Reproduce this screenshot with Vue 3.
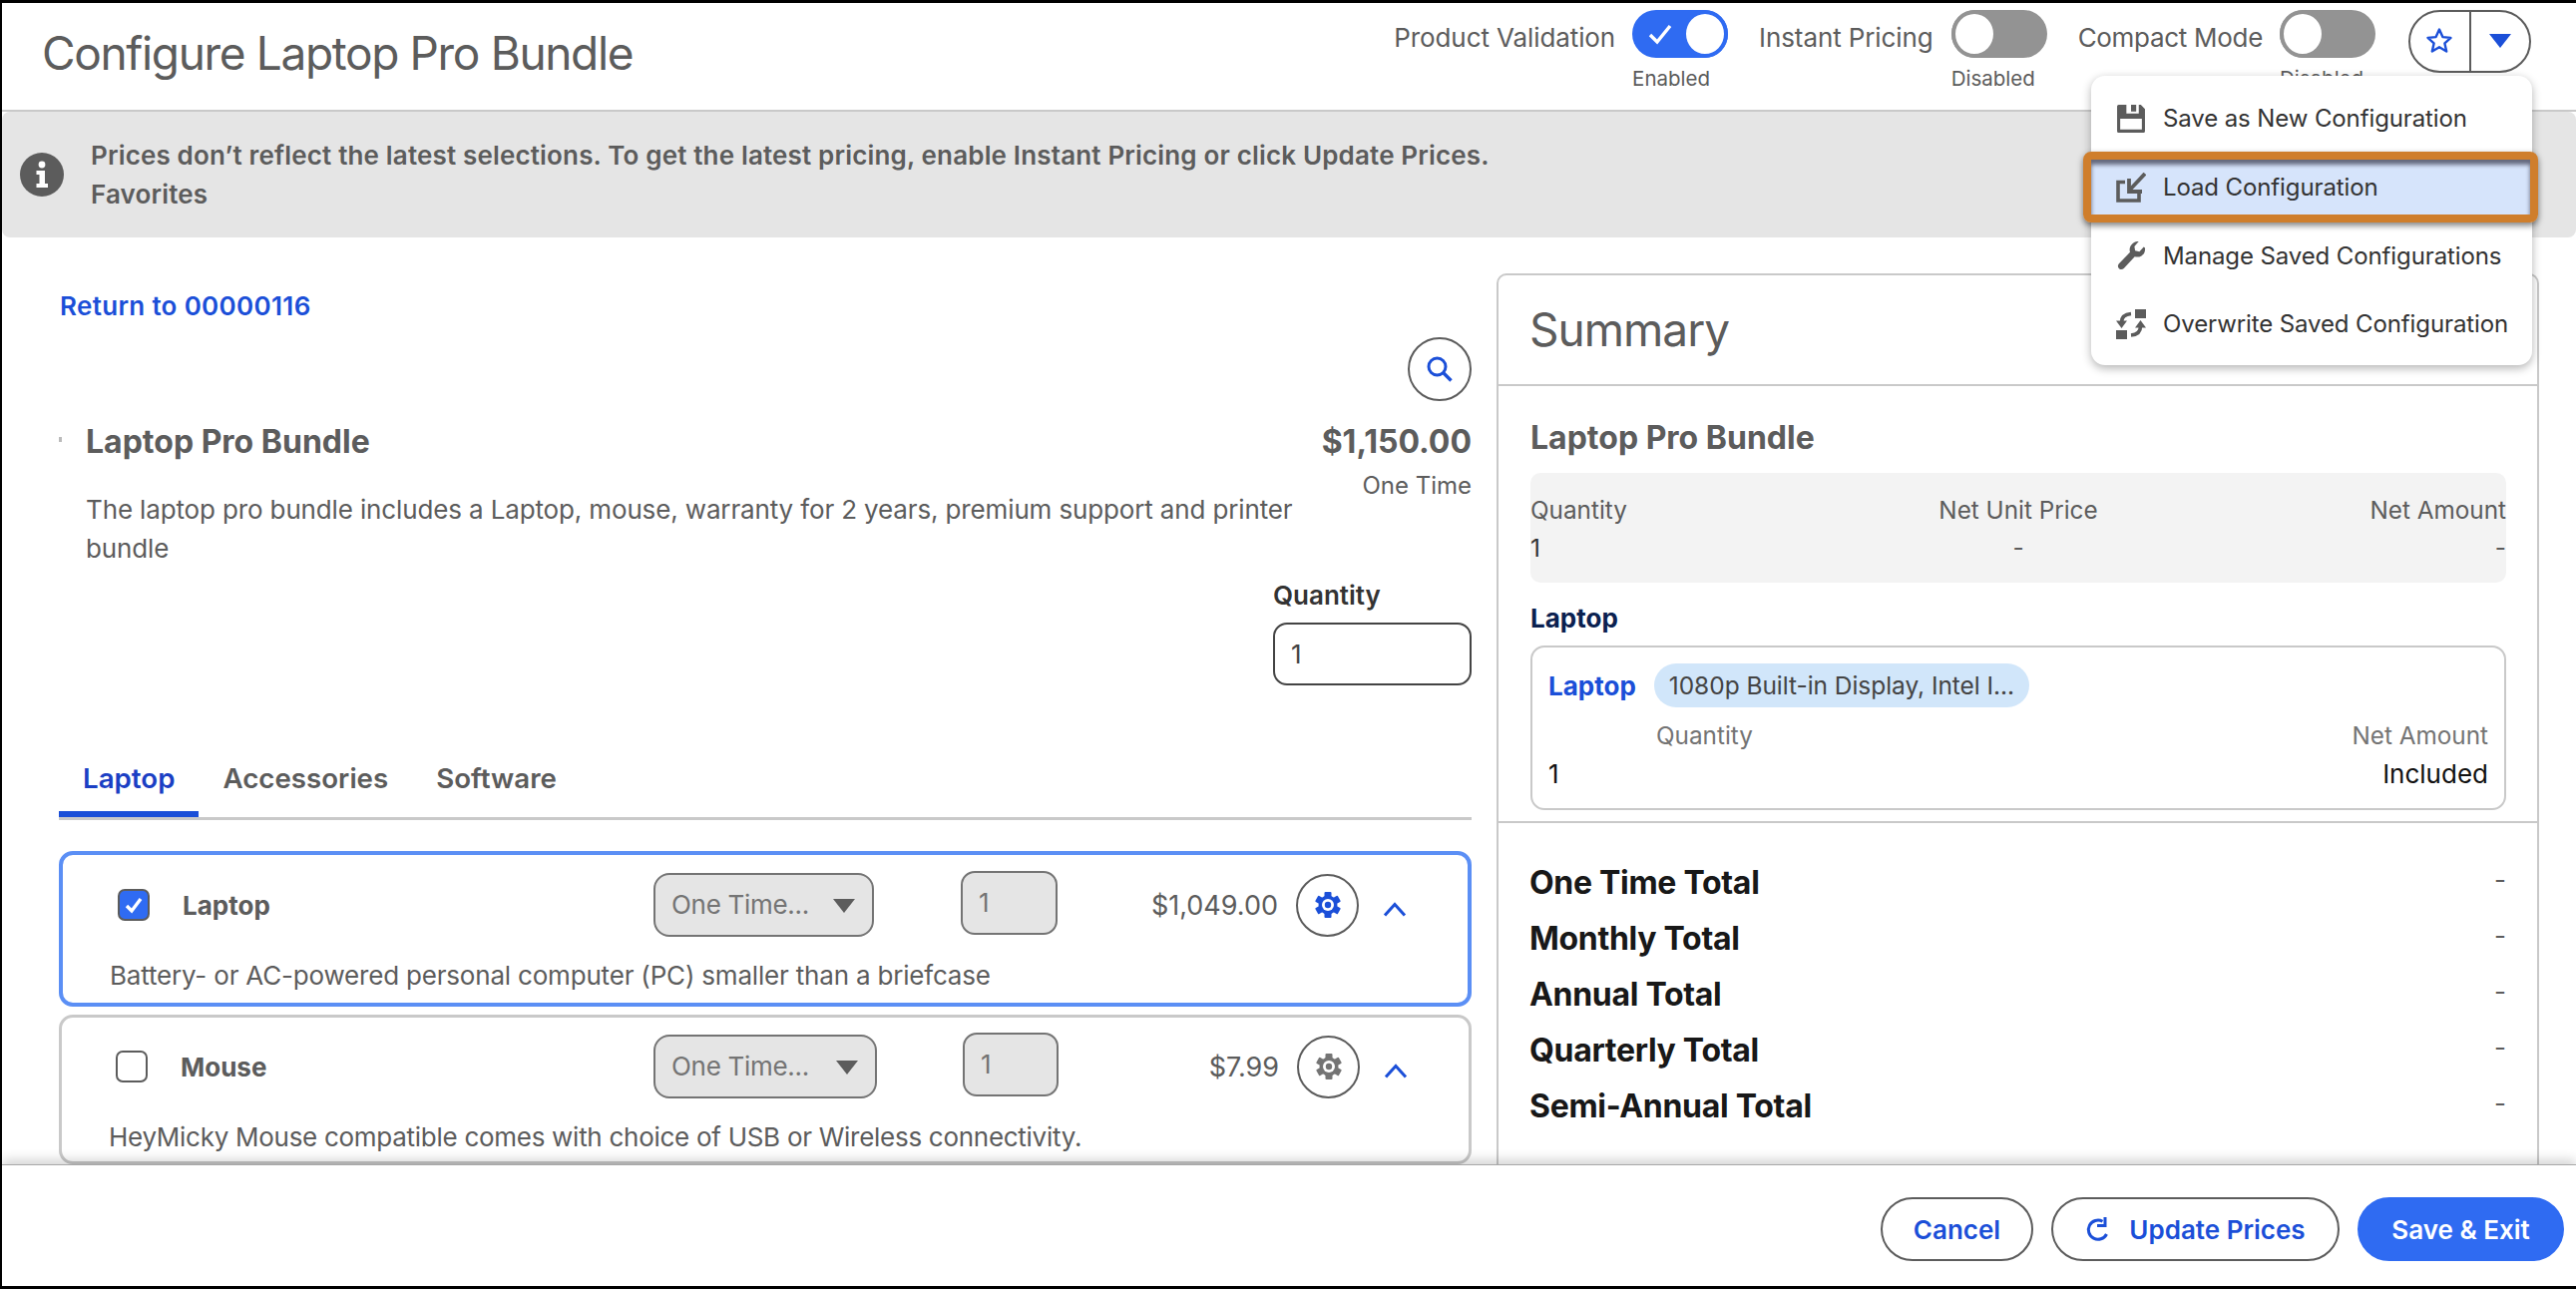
<script setup>
const toggles = [
  { label: 'Product Validation', state: 'Enabled', on: true },
  { label: 'Instant Pricing', state: 'Disabled', on: false },
  { label: 'Compact Mode', state: 'Disabled', on: false },
]
const tabs = ['Laptop', 'Accessories', 'Software']
const totals = ['One Time Total', 'Monthly Total', 'Annual Total', 'Quarterly Total', 'Semi-Annual Total']
const gearTeeth = [0, 60, 120, 180, 240, 300]
</script>

<template>
  <div class="page">
    <header class="header">
      <h1 class="title">Configure Laptop Pro Bundle</h1>
      <div class="controls">
        <div v-for="t in toggles" :key="t.label" class="toggle-item">
          <span class="toggle-label">{{ t.label }}</span>
          <div class="toggle-col">
            <span class="toggle" :class="{ on: t.on }">
              <svg v-if="t.on" class="toggle-check" viewBox="0 0 26 22"><path d="M3 12l7 7L23 3" fill="none" stroke="#fff" stroke-width="3.4" /></svg>
              <span class="knob"></span>
            </span>
            <span class="toggle-state">{{ t.state }}</span>
          </div>
        </div>
        <div class="split">
          <span class="split-part">
            <svg width="28" height="28" viewBox="0 0 28 28"><path d="M14 2.5l3.4 7.6 8.1.8-6.1 5.5 1.8 8.1L14 20.3l-7.2 4.2 1.8-8.1-6.1-5.5 8.1-.8z" fill="none" stroke="#1b4fd8" stroke-width="2.4" stroke-linejoin="round" /></svg>
          </span>
          <span class="split-part split-right">
            <svg width="22" height="14" viewBox="0 0 22 14"><path d="M0 0h22L11 14z" fill="#1b4fd8" /></svg>
          </span>
        </div>
      </div>
    </header>

    <div class="banner">
      <svg class="info" viewBox="0 0 44 44">
        <circle cx="22" cy="22" r="22" fill="#5c5c5c" />
        <circle cx="22" cy="12" r="3.4" fill="#fff" />
        <path d="M16.5 18h8.5v13h3v4H16.5v-4h3v-9h-3z" fill="#fff" />
      </svg>
      <div class="banner-text">
        <div>Prices don’t reflect the latest selections. To get the latest pricing, enable Instant Pricing or click Update Prices.</div>
        <div>Favorites</div>
      </div>
    </div>

    <main class="main">
      <section class="left">
        <a class="return">Return to 00000116</a>
        <div class="search-row">
          <span class="round-btn search">
            <svg width="28" height="28" viewBox="0 0 28 28"><circle cx="11.5" cy="11.5" r="8.5" fill="none" stroke="#1b4fd8" stroke-width="3" /><path d="M17.5 17.5l8 8" stroke="#1b4fd8" stroke-width="3.4" /></svg>
          </span>
        </div>
        <div class="product">
          <div class="product-main">
            <h2 class="product-title">Laptop Pro Bundle</h2>
            <p class="product-desc">The laptop pro bundle includes a Laptop, mouse, warranty for 2 years, premium support and printer bundle</p>
          </div>
          <div class="product-price">
            <div class="price-big">$1,150.00</div>
            <div class="price-sub">One Time</div>
          </div>
        </div>
        <div class="qty-block">
          <div class="qty-label">Quantity</div>
          <div class="qty-input">1</div>
        </div>
        <nav class="tabs">
          <span v-for="(tab, i) in tabs" :key="tab" class="tab" :class="{ active: i === 0 }">{{ tab }}</span>
        </nav>

        <article class="card card-active">
          <div class="card-row">
            <span class="check checked">
              <svg width="22" height="20" viewBox="0 0 22 20"><path d="M4 11l5 5 9-12" fill="none" stroke="#fff" stroke-width="3.4" /></svg>
            </span>
            <span class="card-name">Laptop</span>
            <span class="select">One Time...<i class="select-caret"></i></span>
            <span class="mini-qty">1</span>
            <span class="card-price">$1,049.00</span>
            <span class="round-btn gear-btn">
              <svg width="30" height="30" viewBox="0 0 30 30">
                <g fill="#1b4fd8">
                  <rect v-for="a in gearTeeth" :key="a" x="11.5" y="2" width="7" height="6" rx="1" :transform="`rotate(${a} 15 15)`" />
                  <circle cx="15" cy="15" r="9.5" />
                </g>
                <circle cx="15" cy="15" r="6" fill="#fff" />
                <circle cx="15" cy="15" r="3.2" fill="#1b4fd8" />
              </svg>
            </span>
            <svg class="chevron" width="24" height="15" viewBox="0 0 24 15"><path d="M2 13.5L12 2.5l10 11" fill="none" stroke="#1b4fd8" stroke-width="3" /></svg>
          </div>
          <p class="card-desc">Battery- or AC-powered personal computer (PC) smaller than a briefcase</p>
        </article>

        <article class="card card-plain">
          <div class="card-row">
            <span class="check"></span>
            <span class="card-name">Mouse</span>
            <span class="select">One Time...<i class="select-caret"></i></span>
            <span class="mini-qty">1</span>
            <span class="card-price">$7.99</span>
            <span class="round-btn gear-btn">
              <svg width="30" height="30" viewBox="0 0 30 30">
                <g fill="#747474">
                  <rect v-for="a in gearTeeth" :key="a" x="11.5" y="2" width="7" height="6" rx="1" :transform="`rotate(${a} 15 15)`" />
                  <circle cx="15" cy="15" r="9.5" />
                </g>
                <circle cx="15" cy="15" r="6" fill="#fff" />
                <circle cx="15" cy="15" r="3.2" fill="#747474" />
              </svg>
            </span>
            <svg class="chevron" width="24" height="15" viewBox="0 0 24 15"><path d="M2 13.5L12 2.5l10 11" fill="none" stroke="#1b4fd8" stroke-width="3" /></svg>
          </div>
          <p class="card-desc">HeyMicky Mouse compatible comes with choice of USB or Wireless connectivity.</p>
        </article>
      </section>

      <aside class="summary">
        <div class="summary-head">Summary</div>
        <div class="summary-body">
          <h2 class="summary-title">Laptop Pro Bundle</h2>
          <div class="stat-box">
            <span class="stat-label">Quantity</span>
            <span class="stat-label center">Net Unit Price</span>
            <span class="stat-label right">Net Amount</span>
            <span class="stat-one">1</span>
            <span class="stat-dash center">-</span>
            <span class="stat-dash right">-</span>
          </div>
          <h3 class="group-title">Laptop</h3>
          <div class="line-card">
            <div class="line-head">
              <span class="line-link">Laptop</span>
              <span class="pill">1080p Built-in Display, Intel I...</span>
            </div>
            <div class="line-row line-labels">
              <span>Quantity</span>
              <span>Net Amount</span>
            </div>
            <div class="line-row line-values">
              <span>1</span>
              <span>Included</span>
            </div>
          </div>
        </div>
        <div class="totals">
          <div v-for="t in totals" :key="t" class="total-row">
            <span class="total-name">{{ t }}</span>
            <span class="total-dash">-</span>
          </div>
        </div>
      </aside>
    </main>

    <footer class="footer">
      <button class="btn btn-cancel">Cancel</button>
      <button class="btn btn-update">
        <svg width="26" height="26" viewBox="0 0 26 26"><path d="M17.5 5.2A9.6 9.6 0 1 0 21.5 18" fill="none" stroke="#1b4fd8" stroke-width="3" /><path d="M20 1v8.5h-8" fill="none" stroke="#1b4fd8" stroke-width="3" /></svg>
        Update Prices
      </button>
      <button class="btn btn-save">Save &amp; Exit</button>
    </footer>

    <div class="menu">
      <div class="menu-item">
        <svg class="menu-icon" viewBox="0 0 29 29">
          <path d="M1 2.500A1.500 1.500 0 0 1 2.500 1H24L28 5V26.500A1.500 1.500 0 0 1 26.500 28H2.500A1.500 1.500 0 0 1 1 26.500ZM4 14.500V25H25V14.500ZM10 1V9.500H22V1H19.500V7.500H14.500V1Z" fill="#5c5c5c" fill-rule="evenodd" />
        </svg>
        <span>Save as New Configuration</span>
      </div>
      <div class="menu-item menu-item-hot">
        <svg class="menu-icon" viewBox="0 0 30 30">
          <path d="M9 9.500H2V28H23V19" fill="none" stroke="#5c5c5c" stroke-width="3.600" />
          <path d="M29 1L14 17" fill="none" stroke="#5c5c5c" stroke-width="3.800" />
          <path d="M13 6V19H26" fill="none" stroke="#5c5c5c" stroke-width="3.800" />
        </svg>
        <span>Load Configuration</span>
      </div>
      <div class="menu-item">
        <svg class="menu-icon" viewBox="0 0 30 30">
          <path d="M29 7.500c.4 3.400-1 6.300-3.500 7.900-2.100 1.300-4.600 1.500-6.800.8L7.800 28c-1.300 1.400-3.400 1.500-4.800.2-1.500-1.400-1.500-3.500-.1-4.900L14 11.800c-.8-2.400-.4-5 1.100-7.100C17 2 20 .6 22.700 1.100l-4.300 4.900.7 4.300 4.300 1 4.300-4.900z" fill="#5c5c5c" />
        </svg>
        <span>Manage Saved Configurations</span>
      </div>
      <div class="menu-item">
        <svg class="menu-icon" viewBox="0 0 30 30">
          <rect x="19" y="0" width="11" height="9" fill="#5c5c5c" />
          <rect x="0" y="21" width="11" height="9" fill="#5c5c5c" />
          <path d="M15 4.500C9 5 5.500 7.500 5.500 13" fill="none" stroke="#5c5c5c" stroke-width="3.600" />
          <path d="M0 11.500h11L5.500 19z" fill="#5c5c5c" />
          <path d="M15 26C21 25.500 24.500 23 24.500 17" fill="none" stroke="#5c5c5c" stroke-width="3.600" />
          <path d="M19 18.500h11L24.500 11z" fill="#5c5c5c" />
        </svg>
        <span>Overwrite Saved Configuration</span>
      </div>
    </div>
  </div>
</template>

<style>
html, body { margin: 0; background: #fff; }
</style>

<style scoped>
.page {
  position: relative;
  width: 2582px;
  height: 1292px;
  box-sizing: border-box;
  border-top: 3px solid #000;
  border-left: 2px solid #000;
  border-bottom: 3px solid #000;
  overflow: hidden;
  display: flex;
  flex-direction: column;
  font-family: Inter, "Liberation Sans", sans-serif;
  font-size: 26px;
  color: #5c5c5c;
  background: #fff;
}
.header {
  height: 109px;
  box-sizing: border-box;
  flex: none;
  border-bottom: 2px solid #c9c9c9;
  display: flex;
  justify-content: space-between;
  padding: 0 45px 0 40px;
}
.title {
  margin: 22px 0 0;
  font-size: 46px;
  line-height: 56px;
  font-weight: 400;
  letter-spacing: -1.350px;
}
.controls { display: flex; align-items: flex-start; padding-top: 7px; }
.toggle-item { display: flex; margin-right: 32px; }
.toggle-item:first-child { margin-right: 31px; }
.toggle-item:nth-child(2) { margin-right: 31px; }
.toggle-label { margin-top: 8px; line-height: 40px; margin-right: 17px; letter-spacing: -0.100px; }
.toggle-item:nth-child(2) .toggle-label { margin-right: 18px; }
.toggle-item:nth-child(3) .toggle-label { letter-spacing: -0.300px; }
.toggle-col { width: 96px; display: flex; flex-direction: column; }
.toggle {
  position: relative;
  width: 96px;
  height: 48px;
  box-sizing: border-box;
  border-radius: 24px;
  background: #939393;
  display: flex;
  align-items: center;
}
.toggle.on { background: #2f6bf2; justify-content: flex-end; }
.toggle-check { position: absolute; left: 15px; top: 13px; width: 26px; height: 22px; }
.knob {
  width: 46px;
  height: 48px;
  box-sizing: border-box;
  border-radius: 50%;
  background: #fff;
  border: 4px solid #939393;
}
.on .knob { border-color: #2f6bf2; }
.toggle-state { margin-top: 8px; font-size: 20.500px; line-height: 26px; white-space: nowrap; }
.split {
  margin-left: 1px;
  width: 123px;
  height: 63px;
  box-sizing: border-box;
  border: 2px solid #5c5c5c;
  border-radius: 32px;
  display: flex;
}
.split-part { flex: 1; display: flex; align-items: center; justify-content: center; padding-bottom: 2px; }
.split-right { border-left: 2px solid #5c5c5c; }
.banner {
  height: 126px;
  flex: none;
  box-sizing: border-box;
  background: #e5e5e5;
  border-radius: 8px;
  display: flex;
  align-items: center;
  padding-left: 18px;
  font-weight: 600;
  line-height: 39px;
}
.info { width: 44px; height: 44px; margin-right: 27px; flex: none; }
.banner-text { letter-spacing: 0.160px; }
.main { height: 929px; flex: none; display: flex; overflow: hidden; }
.left {
  width: 1498px;
  flex: none;
  box-sizing: border-box;
  padding: 49px 25px 0 57px;
}
.return { display: block; padding-left: 1px; line-height: 40px; font-weight: 600; color: #1b4fd8; letter-spacing: 0.320px; }
.search-row { display: flex; justify-content: flex-end; margin-top: 11px; }
.round-btn {
  display: flex;
  align-items: center;
  justify-content: center;
  width: 63px;
  height: 63px;
  flex: none;
  box-sizing: border-box;
  border: 2px solid #5c5c5c;
  border-radius: 50%;
  background: #fff;
}
.search { width: 64px; height: 64px; }
.product { position: relative; display: flex; justify-content: space-between; margin-top: 21px; }
.product::before {
  content: "";
  position: absolute;
  left: 0;
  top: 15px;
  width: 3px;
  height: 5px;
  background: #bbb;
}
.product-main { padding-left: 27px; width: 1260px; box-sizing: border-box; }
.product-title { margin: 0; font-size: 32px; line-height: 40px; font-weight: 700; }
.product-desc { margin: 28px 0 0; line-height: 39px; width: 1225px; letter-spacing: -0.140px; }
.product-price { text-align: right; }
.price-big { font-size: 32px; line-height: 40px; font-weight: 700; }
.price-sub { margin-top: 4px; line-height: 40px; font-size: 24px; }
.qty-block { width: 199px; margin: 8px 0 0 auto; }
.qty-label { line-height: 40px; font-weight: 600; color: #333; }
.qty-input {
  margin-top: 7px;
  height: 63px;
  box-sizing: border-box;
  border: 2px solid #444;
  border-radius: 14px;
  padding-left: 16px;
  line-height: 59px;
  color: #444;
}
.tabs { display: flex; margin-top: 73px; border-bottom: 3px solid #c9c9c9; }
.tab {
  height: 59px;
  box-sizing: border-box;
  padding: 0 24px;
  line-height: 40px;
  font-weight: 600;
  font-size: 27.700px;
}
.tab.active { color: #1b3fc4; border-bottom: 6px solid #1b4fd8; }
.card { box-sizing: border-box; border-radius: 14px; background: #fff; }
.card-active { margin-top: 31px; height: 156px; border: 4px solid #5b8ff5; padding: 18px 0 0 55px; }
.card-plain { margin-top: 8px; height: 150px; border: 3px solid #c9c9c9; padding: 17px 0 0 54px; }
.card-row { display: flex; align-items: center; height: 64px; }
.check {
  width: 32px;
  height: 32px;
  box-sizing: border-box;
  flex: none;
  border: 2px solid #5c5c5c;
  border-radius: 7px;
  margin-right: 33px;
  display: flex;
  align-items: center;
  justify-content: center;
  background: #fff;
}
.check.checked { background: #2f6bf2; }
.card-name { font-weight: 700; width: 472px; flex: none; }
.card-plain .card-name { width: 474px; }
.select {
  position: relative;
  width: 221px;
  height: 64px;
  flex: none;
  box-sizing: border-box;
  background: #e5e5e5;
  border: 2px solid #747474;
  border-radius: 16px;
  padding-left: 16px;
  line-height: 60px;
  letter-spacing: -0.300px;
  color: #747474;
}
.card-plain .select { width: 224px; }
.select-caret {
  position: absolute;
  right: 17px;
  top: 24px;
  width: 0;
  height: 0;
  border-left: 11px solid transparent;
  border-right: 11px solid transparent;
  border-top: 14px solid #5c5c5c;
}
.mini-qty {
  width: 97px;
  height: 64px;
  flex: none;
  box-sizing: border-box;
  margin: 0 0 4px 87px;
  background: #e5e5e5;
  border: 2px solid #747474;
  border-radius: 14px;
  padding-left: 16px;
  line-height: 60px;
  color: #747474;
}
.card-plain .mini-qty { margin-left: 86px; width: 96px; }
.card-price { flex: 1; text-align: right; padding-right: 18px; font-size: 27px; }
.gear-btn { width: 63px; height: 63px; }
.chevron { margin: 8px 61px 0 24px; flex: none; }
.card-desc { margin: 19px 0 0 -7px; line-height: 39px; letter-spacing: -0.190px; white-space: nowrap; }
.card-active .card-desc { margin-left: -8px; }
.card-plain .card-desc { letter-spacing: -0.280px; }
.summary {
  width: 1045px;
  height: 1000px;
  margin-top: 36px;
  flex: none;
  box-sizing: border-box;
  border: 2px solid #c9c9c9;
  border-radius: 10px 10px 0 0;
}
.summary-head {
  height: 111px;
  box-sizing: border-box;
  border-bottom: 2px solid #c9c9c9;
  padding: 25px 0 0 31px;
  font-size: 46px;
  line-height: 58px;
  letter-spacing: -1px;
}
.summary-body { padding: 32px 31px 11px 32px; border-bottom: 2px solid #c9c9c9; }
.summary-title { margin: 0; font-size: 32px; line-height: 40px; font-weight: 700; }
.stat-box {
  margin-top: 15px;
  height: 110px;
  box-sizing: border-box;
  background: #f3f3f3;
  border-radius: 10px;
  padding-top: 18px;
  display: grid;
  grid-template-columns: 1fr 1fr 1fr;
  grid-auto-rows: 38px;
  font-size: 24.300px;
  line-height: 38px;
}
.center { text-align: center; }
.right { text-align: right; }
.stat-one { color: #333; }
.group-title { margin: 18px 0 0; font-size: 26px; line-height: 36px; font-weight: 700; color: #0b2150; }
.line-card {
  margin-top: 9px;
  height: 165px;
  box-sizing: border-box;
  border: 2px solid #c9c9c9;
  border-radius: 14px;
  padding: 16px 16px 0;
}
.line-head { display: flex; align-items: center; height: 44px; }
.line-link { color: #1b4fd8; font-weight: 700; margin-right: 18px; }
.pill {
  width: 376px;
  height: 44px;
  box-sizing: border-box;
  border-radius: 22px;
  background: #d1e6fa;
  padding-left: 15px;
  line-height: 44px;
  font-size: 24.500px;
  letter-spacing: -0.050px;
  white-space: nowrap;
  color: #444;
}
.line-row { display: flex; justify-content: space-between; font-size: 24.300px; line-height: 36px; }
.line-labels { margin-top: 10px; padding-left: 108px; color: #747474; }
.line-values { margin-top: 3px; color: #111; font-size: 26px; }
.totals { padding: 32px 31px 0 31px; }
.total-row { display: flex; justify-content: space-between; height: 56px; line-height: 56px; }
.total-name { font-size: 32px; font-weight: 700; letter-spacing: -0.300px; color: #181818; }
.total-dash { line-height: 50px; }
.footer {
  position: relative;
  height: 122px;
  flex: none;
  box-sizing: border-box;
  border-top: 1px solid #a8a8a8;
  background: #fff;
  box-shadow: 0 -5px 10px rgba(0, 0, 0, 0.16);
  display: flex;
  justify-content: flex-end;
  align-items: flex-start;
  gap: 18px;
  padding: 32px 12px 0 0;
}
.btn {
  height: 64px;
  box-sizing: border-box;
  border: 2px solid #5c5c5c;
  border-radius: 32px;
  background: #fff;
  color: #1b4fd8;
  font: 600 26px Inter, "Liberation Sans", sans-serif;
  display: flex;
  align-items: center;
  justify-content: center;
  gap: 18px;
  padding: 0;
}
.btn-cancel { width: 153px; }
.btn-update { width: 289px; }
.btn-save { width: 207px; background: #2f6bf2; border-color: #2f6bf2; color: #fff; }
.menu {
  position: absolute;
  left: 2094px;
  top: 73px;
  width: 442px;
  box-sizing: border-box;
  padding: 8.500px 0 6.500px;
  background: #fff;
  border-radius: 14px;
  box-shadow: 0 3px 10px rgba(0, 0, 0, 0.3);
  z-index: 5;
}
.menu-item {
  position: relative;
  height: 68.700px;
  display: flex;
  align-items: center;
  padding-left: 25px;
  font-size: 24px;
  letter-spacing: -0.110px;
  color: #333;
}
.menu-item-hot { background: #d6e4fb; }
.menu-item-hot::after {
  content: "";
  position: absolute;
  inset: -1px -6px -1px -8px;
  box-sizing: border-box;
  border: 8px solid #cf7e2c;
  border-radius: 8px;
  box-shadow: 0 3px 6px rgba(0, 0, 0, 0.5), inset 0 5px 4px rgba(50, 50, 70, 0.7);
  pointer-events: none;
}
.menu-icon { width: 30px; height: 30px; margin-right: 17px; flex: none; }
</style>
